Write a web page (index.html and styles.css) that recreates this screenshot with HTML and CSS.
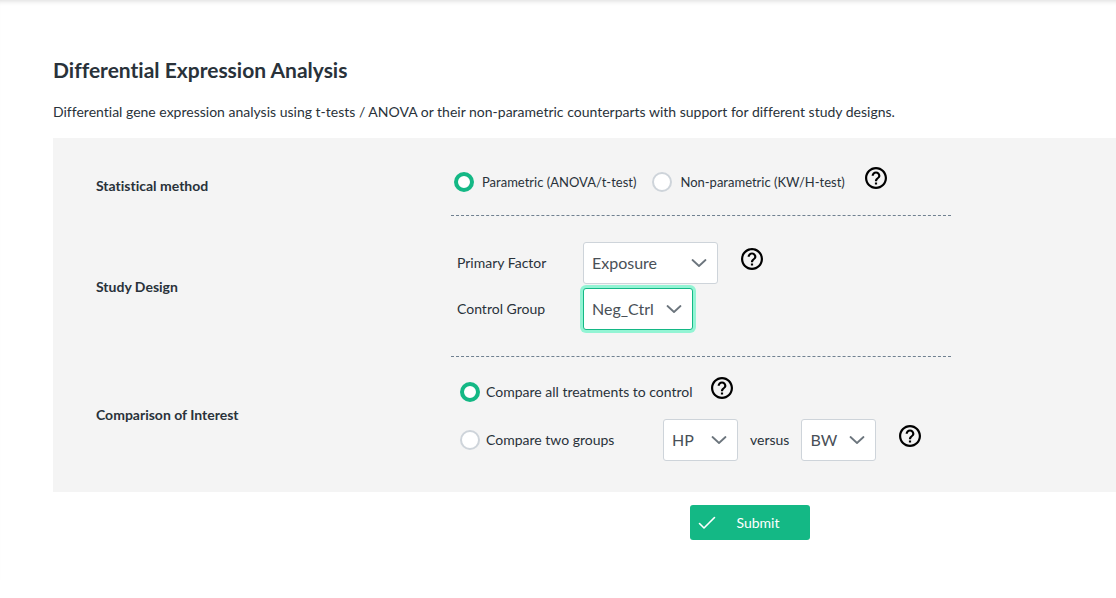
FILE: index.html
```html
<!DOCTYPE html>
<html lang="en">
<head>
  <meta charset="UTF-8">
  <meta name="viewport" content="width=device-width, initial-scale=1.0">
  <title>Differential Expression Analysis</title>
  <link rel="stylesheet" href="styles.css">
</head>
<body>
  <svg class="symbols" aria-hidden="true">
    <symbol id="icon-help" viewBox="2 2 20 20">
      <path d="M11 18h2v-2h-2v2zm1-16C6.480 2 2 6.480 2 12s4.480 10 10 10 10-4.480 10-10S17.520 2 12 2zm0 18c-4.410 0-8-3.590-8-8s3.590-8 8-8 8 3.590 8 8-3.590 8-8 8zm0-14c-2.210 0-4 1.790-4 4h2c0-1.100.9-2 2-2s2 .9 2 2c0 2-3 1.750-3 5h2c0-2.250 3-2.500 3-5 0-2.210-1.790-4-4-4z"/>
    </symbol>
    <symbol id="icon-chevron" viewBox="0 0 16 16">
      <path d="M1.500 5L8 11l6.500-6" fill="none" stroke="#6c757d" stroke-width="1.800" stroke-linecap="round" stroke-linejoin="round"/>
    </symbol>
  </svg>

  <main class="page">
    <h1>Differential Expression Analysis</h1>
    <p class="intro">Differential gene expression analysis using t-tests / ANOVA or their non-parametric counterparts with support for different study designs.</p>

    <form>
      <div class="panel">
        <section class="row">
          <h2>Statistical method</h2>
          <div class="fields method">
            <label class="choice"><input type="radio" name="method" checked>Parametric (ANOVA/t-test)</label>
            <label class="choice"><input type="radio" name="method">Non-parametric (KW/H-test)</label>
            <button type="button" class="help" aria-label="Help on statistical method"><svg><use href="#icon-help"/></svg></button>
          </div>
        </section>

        <section class="row">
          <h2>Study Design</h2>
          <div class="fields design">
            <div class="line">
              <label class="field-name" for="factor">Primary Factor</label>
              <span class="select wide">
                <select id="factor"><option>Exposure</option></select>
                <svg><use href="#icon-chevron"/></svg>
              </span>
              <button type="button" class="help" aria-label="Help on study design"><svg><use href="#icon-help"/></svg></button>
            </div>
            <div class="line">
              <label class="field-name" for="control">Control Group</label>
              <span class="select medium active">
                <select id="control"><option>Neg_Ctrl</option></select>
                <svg><use href="#icon-chevron"/></svg>
              </span>
            </div>
          </div>
        </section>

        <section class="row">
          <h2>Comparison of Interest</h2>
          <div class="fields comparison">
            <div class="line all">
              <label class="choice"><input type="radio" name="comparison" checked>Compare all treatments to control</label>
              <button type="button" class="help" aria-label="Help on comparing to control"><svg><use href="#icon-help"/></svg></button>
            </div>
            <div class="line">
              <label class="choice two-groups"><input type="radio" name="comparison">Compare two groups</label>
              <span class="select">
                <select aria-label="First group"><option>HP</option></select>
                <svg><use href="#icon-chevron"/></svg>
              </span>
              <span class="versus">versus</span>
              <span class="select">
                <select aria-label="Second group"><option>BW</option></select>
                <svg><use href="#icon-chevron"/></svg>
              </span>
              <button type="button" class="help" aria-label="Help on comparing two groups"><svg><use href="#icon-help"/></svg></button>
            </div>
          </div>
        </section>
      </div>

      <button type="submit" class="submit">
        <svg viewBox="0 0 18 14"><path d="M1.500 7.500l4.500 4.500L16.500 1.500" fill="none" stroke="currentColor" stroke-width="1.600" stroke-linecap="round" stroke-linejoin="round"/></svg>
        <span>Submit</span>
      </button>
    </form>
  </main>
</body>
</html>
```

FILE: styles.css
```css
* {
  box-sizing: border-box;
}

body {
  margin: 0;
  background-color: #fff;
  color: #29323a;
  font-family: Lato, "Liberation Sans", sans-serif;
  font-size: 14px;
  line-height: 20px;
  font-variant-ligatures: none;
}

.symbols {
  display: none;
}

.page {
  padding: 56px 0 40px 53px;
  box-shadow: inset 0 5px 5px -4px rgba(0, 0, 0, 0.15);
}

h1 {
  margin: 0;
  font-size: 21px;
  font-weight: 700;
  line-height: 28px;
}

.intro {
  margin: 18px 0 16px;
}

/* Options panel */
.panel {
  padding: 18px 0 19px 43px;
  background-color: #f4f4f4;
}

.row {
  display: grid;
  grid-template-columns: 355px minmax(0, 500px);
  align-items: center;
}

h2 {
  margin: 0;
  font-size: 14px;
  font-weight: 700;
}

.fields {
  border-bottom: 1px dashed #708090;
}

.line,
.choice {
  display: flex;
  align-items: center;
}

.method {
  display: flex;
  align-items: center;
  gap: 16px;
  height: 60px;
  padding: 0 3px 7px;
  font-size: 13px;
}

.method .choice {
  gap: 8px;
}

.method .help {
  margin-left: 4px;
}

.design {
  display: flex;
  flex-direction: column;
  gap: 4px;
  padding: 26px 0 26px 6px;
}

.field-name {
  width: 126px;
}

.comparison {
  display: flex;
  flex-direction: column;
  gap: 12px;
  padding: 20px 0 12px 9px;
  border-bottom: none;
}

.comparison .choice {
  gap: 6px;
}

.all {
  height: 30px;
}

.two-groups {
  width: 203px;
}

.versus {
  margin: 0 12px;
}

/* Controls */
input[type="radio"] {
  appearance: none;
  flex: none;
  width: 20px;
  height: 20px;
  margin: 0;
  border: 2px solid #ced4da;
  border-radius: 50%;
  background-color: #fff;
}

input[type="radio"]:checked {
  border: 4px solid #14b885;
}

.select {
  position: relative;
  width: 75px;
  height: 42px;
}

.select.medium {
  width: 110px;
}

.select.wide {
  width: 135px;
}

select {
  appearance: none;
  width: 100%;
  height: 100%;
  padding: 0 8px 2px;
  border: 1px solid #ced4da;
  border-radius: 3px;
  background-color: #fff;
  color: #495057;
  font-family: inherit;
  font-size: 16px;
}

.active select {
  border-color: #14b885;
  box-shadow: 0 0 0 3px #93f4d4;
}

.select svg {
  position: absolute;
  top: 13px;
  right: 11px;
  width: 16px;
  height: 16px;
  pointer-events: none;
}

.help {
  width: 22px;
  height: 22px;
  margin: 0 0 8px 23px;
  padding: 0;
  border: none;
  background: none;
  cursor: pointer;
}

.help svg {
  display: block;
  width: 22px;
  height: 22px;
}

.all .help {
  margin-left: 18px;
}

.submit {
  display: flex;
  align-items: center;
  width: 120px;
  height: 35px;
  margin: 13px 0 0 637px;
  padding: 0 8px;
  border: none;
  border-radius: 3px;
  background-color: #14b885;
  color: #fff;
  font-family: inherit;
  font-size: 14px;
  cursor: pointer;
}

.submit svg {
  width: 18px;
  height: 14px;
}

.submit span {
  flex: 1;
  padding-right: 2px;
}
```
